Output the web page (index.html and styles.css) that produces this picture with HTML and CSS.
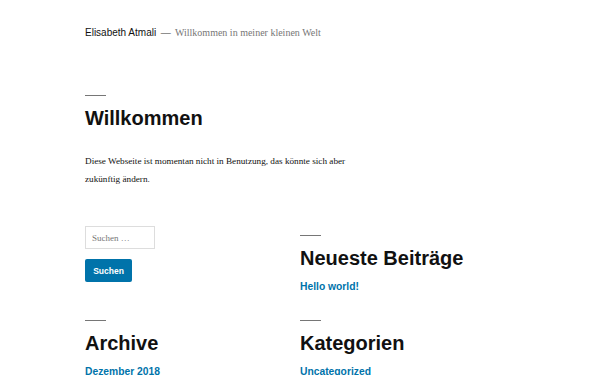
FILE: index.html
```html
<!DOCTYPE html>
<html lang="de">
<head>
  <meta charset="UTF-8">
  <meta name="viewport" content="width=device-width, initial-scale=1.0">
  <title>Elisabeth Atmali – Willkommen in meiner kleinen Welt</title>
  <link rel="stylesheet" href="styles.css">
</head>
<body>
  <header class="site-header">
    <span class="site-title">Elisabeth Atmali</span>
    <span class="site-dash">—</span>
    <span class="site-description">Willkommen in meiner kleinen Welt</span>
  </header>

  <main class="site-main">
    <article class="entry">
      <h1 class="entry-title">Willkommen</h1>
      <div class="entry-content">
        <p>Diese Webseite ist momentan nicht in Benutzung, das könnte sich aber zukünftig ändern.</p>
      </div>
    </article>

    <div class="widgets">
      <section class="widget widget-search">
        <form class="search-form">
          <input type="search" class="search-field" placeholder="Suchen …">
          <button type="submit" class="search-submit">Suchen</button>
        </form>
      </section>

      <section class="widget">
        <h2 class="widget-title">Neueste Beiträge</h2>
        <ul>
          <li><a href="#">Hello world!</a></li>
        </ul>
      </section>

      <section class="widget">
        <h2 class="widget-title">Archive</h2>
        <ul>
          <li><a href="#">Dezember 2018</a></li>
        </ul>
      </section>

      <section class="widget">
        <h2 class="widget-title">Kategorien</h2>
        <ul>
          <li><a href="#">Uncategorized</a></li>
        </ul>
      </section>
    </div>
  </main>
</body>
</html>
```

FILE: styles.css
```css
body {
  margin: 0;
  padding: 0;
  background: #fff;
  color: #111;
  font-family: "Liberation Serif", "Times New Roman", serif;
}
.site-header {
  padding: 25px 85px 0;
  line-height: 16px;
  font-size: 10px;
}
.site-title {
  font-family: "Liberation Sans", Arial, sans-serif;
  color: #111;
}
.site-dash {
  color: #767676;
  margin: 0 2px;
  font-family: "Liberation Sans", Arial, sans-serif;
}
.site-description {
  color: #767676;
}
.site-main {
  padding: 0 85px;
}
.entry {
  margin-top: 54px;
}
.entry-title,
.widget-title {
  margin: 0;
  font-family: "Liberation Sans", Arial, sans-serif;
  font-size: 20px;
  line-height: 24px;
  font-weight: 700;
  color: #111;
}
.entry-title::before,
.widget-title::before {
  content: "";
  display: block;
  width: 21px;
  height: 1px;
  background: #767676;
  margin-bottom: 10px;
}
.entry-content p {
  margin: 22px 0 0;
  font-size: 9.2px;
  line-height: 18px;
  max-width: 270px;
}
.widgets {
  display: grid;
  grid-template-columns: 215px 1fr;
  row-gap: 26px;
  margin-top: 38px;
}
.widget ul {
  list-style: none;
  margin: 6px 0 0;
  padding: 0;
}
.widget a {
  font-family: "Liberation Sans", Arial, sans-serif;
  font-size: 10.3px;
  font-weight: 700;
  color: #0073aa;
  text-decoration: none;
}
.widgets .widget:nth-child(2) {
  padding-top: 9px;
}
.search-form {
  display: flex;
  flex-direction: column;
  align-items: flex-start;
  gap: 10px;
}
.search-field {
  box-sizing: border-box;
  width: 70px;
  height: 23px;
  padding: 0 6px;
  border: 1px solid #ddd;
  border-radius: 0;
  font-family: "Liberation Serif", "Times New Roman", serif;
  font-size: 9px;
  color: #111;
  outline: none;
}
.search-field::placeholder {
  color: #767676;
}
.search-submit {
  width: 47px;
  height: 23px;
  padding: 0;
  border: none;
  border-radius: 2px;
  background: #0073aa;
  color: #fff;
  font-family: "Liberation Sans", Arial, sans-serif;
  font-size: 8.5px;
  font-weight: 700;
  cursor: pointer;
}
```
